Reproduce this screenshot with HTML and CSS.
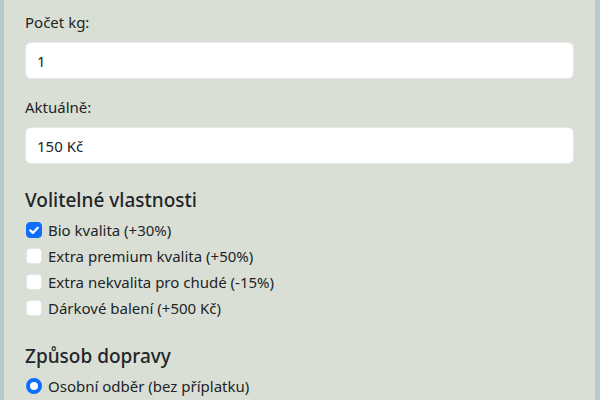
FILE: index.html
```html
<!DOCTYPE html>
<html lang="cs">
<head>
<meta charset="utf-8">
<link rel="stylesheet" href="styles.css">
</head>
<body>
<div class="panel">
  <div class="field">
    <label class="label" for="kg">Počet kg:</label>
    <input class="input" id="kg" type="text" value="1">
  </div>
  <div class="field">
    <label class="label" for="akt">Aktuálně:</label>
    <input class="input" id="akt" type="text" value="150 Kč">
  </div>
  <h5 class="heading heading-first">Volitelné vlastnosti</h5>
  <div class="check"><span class="box box-on"><svg viewBox="0 0 16 16" width="16" height="16"><path d="M4.2 8.3l2.6 2.6 5-5.2" fill="none" stroke="#fff" stroke-width="2.2" stroke-linecap="round" stroke-linejoin="round"/></svg></span><span class="check-text">Bio kvalita (+30%)</span></div>
  <div class="check"><span class="box"></span><span class="check-text">Extra premium kvalita (+50%)</span></div>
  <div class="check"><span class="box"></span><span class="check-text">Extra nekvalita pro chudé (-15%)</span></div>
  <div class="check"><span class="box"></span><span class="check-text">Dárkové balení (+500 Kč)</span></div>
  <h5 class="heading heading-second">Způsob dopravy</h5>
  <div class="check"><span class="radio"></span><span class="check-text">Osobní odběr (bez příplatku)</span></div>
</div>
</body>
</html>
```
FILE: styles.css
```css
html, body {
  margin: 0;
  padding: 0;
  background: #dadfd5;
}
body {
  font-family: "Noto Sans", "Open Sans", sans-serif;
  font-size: 15px;
  color: #212529;
  overflow: hidden;
  height: 400px;
}
.panel {
  box-sizing: border-box;
  width: 600px;
  min-height: 400px;
  background: #dadfd5;
  border-left: 4px solid #b7cbce;
  border-right: 5px solid #b7cbce;
  padding: 10px 21px 0 21px;
}
.field {
  margin-bottom: 16px;
}
.label {
  display: block;
  line-height: 24px;
  height: 24px;
  margin-bottom: 8px;
}
.input {
  display: block;
  box-sizing: border-box;
  width: 100%;
  height: 37px;
  border: 1px solid #e4e7ea;
  border-radius: 6px;
  background: #fff;
  padding: 0 11px;
  font-family: inherit;
  font-size: 15px;
  color: #212529;
  outline: none;
}
.heading {
  margin: 0 0 6px 0;
  font-size: 19px;
  font-weight: 500;
  line-height: 24px;
}
.heading-first {
  margin-top: 24px;
}
.heading-second {
  margin-top: 24px;
}
.check {
  display: flex;
  align-items: center;
  height: 24px;
  margin-bottom: 2px;
}
.box {
  box-sizing: border-box;
  width: 16px;
  height: 16px;
  flex: none;
  background: #fff;
  border: 1px solid #e4e7ea;
  border-radius: 4px;
  margin-left: 1px;
  margin-right: 6px;
  display: flex;
}
.box-on {
  background: #0d6efd;
  border-color: #0d6efd;
}
.box-on svg {
  margin: -1px;
}
.radio {
  box-sizing: border-box;
  width: 16px;
  height: 16px;
  flex: none;
  border-radius: 50%;
  background: #fff;
  border: 4px solid #0d6efd;
  margin-left: 1px;
  margin-right: 6px;
}
```
